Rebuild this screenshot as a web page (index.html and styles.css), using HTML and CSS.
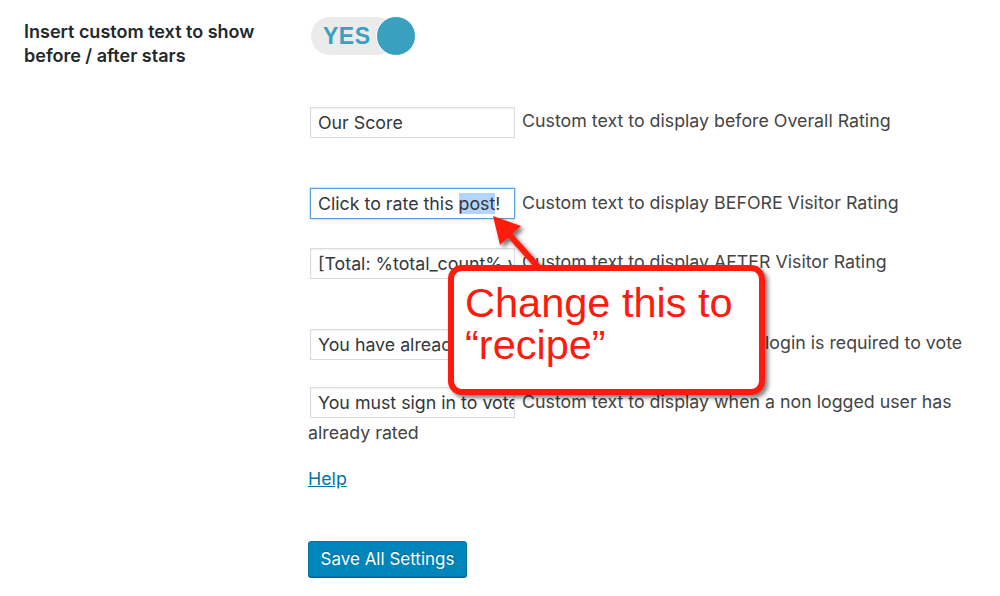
FILE: index.html
```html
<!DOCTYPE html>
<html>
<head>
<meta charset="utf-8">
<link rel="stylesheet" href="styles.css">
</head>
<body>
<div class="page">
  <div class="label">Insert custom text to show before / after stars</div>
  <div class="field">
    <div class="toggle"><span class="toggle-text">YES</span><span class="knob"></span></div>

    <div class="group group-first">
      <div class="line"><span class="input">Our Score</span> <span class="desc">Custom text to display before Overall Rating</span></div>
    </div>

    <div class="group">
      <div class="line"><span class="input focus">Click to rate this <span class="sel">post</span>!</span> <span class="desc">Custom text to display BEFORE Visitor Rating</span></div>
      <div class="line"><span class="input">[Total: %total_count% votes]</span> <span class="desc">Custom text to display AFTER Visitor Rating</span></div>
    </div>

    <div class="group group-tight">
      <div class="line"><span class="input">You have already voted</span> <span class="desc">Custom text to display when login is required to vote</span></div>
      <div class="line"><span class="input">You must sign in to vote</span> <span class="desc">Custom text to display when a non logged user has already rated</span></div>
    </div>

    <div class="help"><a href="#">Help</a></div>

    <div class="actions"><button class="btn">Save All Settings</button></div>
  </div>

  <svg class="arrow" width="1000" height="596" viewBox="0 0 1000 596">
    <defs>
      <filter id="sh" x="-50%" y="-50%" width="200%" height="200%">
        <feDropShadow dx="3" dy="3" stdDeviation="2" flood-color="#000" flood-opacity="0.55"/>
      </filter>
    </defs>
    <g filter="url(#sh)">
      <line x1="548" y1="278" x2="506" y2="231" stroke="#ff1a0d" stroke-width="6"/>
      <polygon points="493,216 521,226 500,245" fill="#ff1a0d"/>
    </g>
  </svg>

  <div class="callout">Change this to<br>“recipe”</div>
</div>
</body>
</html>
```
FILE: styles.css
```css
html, body {
  margin: 0;
  padding: 0;
  background: #fff;
}
body {
  font-family: Inter, "Liberation Sans", Arial, sans-serif;
  color: #444;
  width: 1000px;
  height: 596px;
  overflow: hidden;
}
.page {
  position: relative;
  display: flex;
  width: 1000px;
  height: 596px;
}
.label {
  width: 260px;
  padding: 20px 0 0 24px;
  font-size: 18px;
  line-height: 24px;
  font-weight: 600;
  color: #23282d;
  box-sizing: content-box;
}
.field {
  margin-left: 24px;
  padding-top: 17px;
  width: 660px;
}
.toggle {
  position: relative;
  margin-left: 3px;
  width: 85px;
  height: 38px;
  background: #ebebeb;
  border-radius: 19px;
  display: flex;
  align-items: center;
}
.toggle-text {
  margin-left: 12px;
  font-family: "Liberation Sans", Arial, sans-serif;
  font-size: 23px;
  font-weight: bold;
  color: #3b9fc1;
  letter-spacing: 0.5px;
}
.knob {
  position: absolute;
  left: 65px;
  top: -1px;
  width: 38px;
  height: 38px;
  border-radius: 50%;
  background: #3ba0c0;
  border: 1px solid #fff;
}
.group {
  margin-top: 50px;
}
.group-first {
  margin-top: 51px;
}
.group-tight {
  margin-top: 49px;
}
.line {
  font-size: 17.8px;
  line-height: 29px;
  color: #444;
}
.line + .line {
  margin-top: 28px;
}
.group-tight .line + .line {
  margin-top: 27px;
}
.input {
  display: inline-block;
  vertical-align: middle;
  box-sizing: border-box;
  width: 205px;
  height: 31px;
  margin: 0 2px;
  padding: 0 7px;
  border: 1px solid #dcdcdc;
  box-shadow: inset 0 1px 2px rgba(0,0,0,0.07);
  background: #fff;
  color: #32373c;
  font-size: 17.8px;
  line-height: 29px;
  white-space: nowrap;
  overflow: hidden;
}
.input.focus {
  border-color: #5b9dd9;
  box-shadow: 0 0 2px rgba(30,140,190,0.6);
}
.sel {
  background: #b3d4fc;
}
.desc {
  color: #444;
}
.help {
  margin-top: 20px;
  font-size: 17.8px;
  line-height: 24px;
}
.help a {
  color: #0073aa;
  text-decoration: underline;
}
.actions {
  margin-top: 50px;
}
.btn {
  height: 36px;
  width: 159px;
  padding: 0 8px;
  background: #0085ba;
  border: 1px solid #0073aa;
  border-radius: 3px;
  box-shadow: 0 1px 0 #006799;
  color: #fff;
  font-family: Inter, "Liberation Sans", Arial, sans-serif;
  font-size: 17px;
  text-shadow: 0 -1px 1px #006799;
}
.arrow {
  position: absolute;
  left: 0;
  top: 0;
  pointer-events: none;
}
.callout {
  position: absolute;
  left: 448px;
  top: 265px;
  width: 317px;
  height: 130px;
  box-sizing: border-box;
  border: 6px solid #ff1a0d;
  border-radius: 14px;
  background: #fff;
  box-shadow: 3px 3px 4px rgba(0,0,0,0.5);
  padding: 11px 0 0 11px;
  color: #ff1a0d;
  font-size: 41.5px;
  line-height: 42px;
  font-family: "Liberation Sans", Arial, sans-serif;
}
```
